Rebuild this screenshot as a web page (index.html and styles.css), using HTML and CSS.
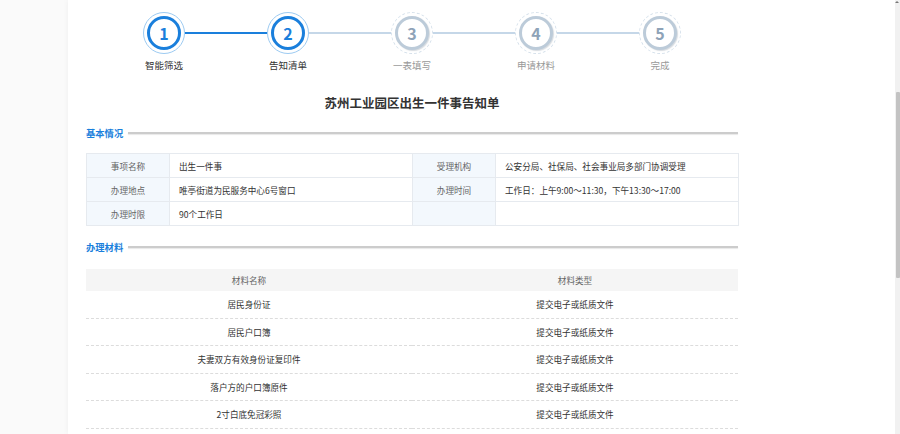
FILE: index.html
```html
<!DOCTYPE html>
<html lang="zh-CN">
<head>
<meta charset="utf-8">
<title>苏州工业园区出生一件事告知单</title>
<link rel="stylesheet" href="styles.css">
</head>
<body>
<div class="page">
  <div class="gutter"></div>
  <main class="panel">
    <div class="steps">
      <div class="step done">
        <span class="circle"><span class="num">1</span></span>
        <span class="label">智能筛选</span>
      </div>
      <span class="conn on"></span>
      <div class="step done">
        <span class="circle"><span class="num">2</span></span>
        <span class="label">告知清单</span>
      </div>
      <span class="conn"></span>
      <div class="step">
        <span class="circle"><span class="num">3</span></span>
        <span class="label">一表填写</span>
      </div>
      <span class="conn"></span>
      <div class="step">
        <span class="circle"><span class="num">4</span></span>
        <span class="label">申请材料</span>
      </div>
      <span class="conn"></span>
      <div class="step">
        <span class="circle"><span class="num">5</span></span>
        <span class="label">完成</span>
      </div>
    </div>

    <h1 class="title">苏州工业园区出生一件事告知单</h1>

    <h2 class="sec">基本情况</h2>
    <table class="info">
      <colgroup>
        <col class="c-label"><col class="c-value"><col class="c-label"><col class="c-value">
      </colgroup>
      <tr>
        <td class="k">事项名称</td><td class="v">出生一件事</td>
        <td class="k">受理机构</td><td class="v">公安分局、社保局、社会事业局多部门协调受理</td>
      </tr>
      <tr>
        <td class="k">办理地点</td><td class="v">唯亭街道为民服务中心6号窗口</td>
        <td class="k">办理时间</td><td class="v">工作日：上午9:00～11:30，下午13:30～17:00</td>
      </tr>
      <tr>
        <td class="k">办理时限</td><td class="v">90个工作日</td>
        <td class="k"></td><td class="v"></td>
      </tr>
    </table>

    <h2 class="sec sec2">办理材料</h2>
    <table class="mat">
      <thead>
        <tr><th>材料名称</th><th>材料类型</th></tr>
      </thead>
      <tbody>
        <tr><td>居民身份证</td><td>提交电子或纸质文件</td></tr>
        <tr><td>居民户口簿</td><td>提交电子或纸质文件</td></tr>
        <tr><td>夫妻双方有效身份证复印件</td><td>提交电子或纸质文件</td></tr>
        <tr><td>落户方的户口簿原件</td><td>提交电子或纸质文件</td></tr>
        <tr><td>2寸白底免冠彩照</td><td>提交电子或纸质文件</td></tr>
      </tbody>
    </table>
  </main>
  <div class="filler"></div>
  <div class="scrollbar">
    <span class="arrow"></span>
    <span class="thumb"></span>
  </div>
</div>
</body>
</html>
```

FILE: styles.css
```css
html, body {
  margin: 0;
  padding: 0;
  height: 434px;
  overflow: hidden;
  background: #fff;
  font-family: "Noto Sans CJK SC", "Microsoft YaHei", sans-serif;
  color: #333;
}

.page {
  display: flex;
  height: 434px;
}

.gutter {
  width: 68px;
  flex: none;
  background: #fafafa;
}

.panel {
  width: 689px;
  flex: none;
  box-sizing: border-box;
  padding: 0 19px 0 18px;
  background: #fff;
  box-shadow: 0 0 6px rgba(0, 0, 0, 0.05);
}

.filler {
  flex: 1;
  background: #fff;
}

.scrollbar {
  width: 5px;
  flex: none;
  background: #f1f1f1;
  display: flex;
  flex-direction: column;
  align-items: flex-end;
}

.arrow {
  width: 0;
  height: 0;
  margin: 1px 1px 0 0;
  border-left: 2px solid transparent;
  border-right: 2px solid transparent;
  border-bottom: 2px solid #777;
}

.thumb {
  width: 4px;
  height: 186px;
  margin-top: 89px;
  background: #c3c3c3;
  border-radius: 1px;
}

/* steps */
.steps {
  display: flex;
  justify-content: center;
  align-items: flex-start;
  margin-top: 12px;
}

.step {
  width: 42px;
  display: flex;
  flex-direction: column;
  align-items: center;
}

.circle {
  width: 42px;
  height: 42px;
  box-sizing: border-box;
  border-radius: 50%;
  border: 1px dashed #d6e1eb;
  display: flex;
  align-items: center;
  justify-content: center;
}

.num {
  width: 34px;
  height: 34px;
  box-sizing: border-box;
  border-radius: 50%;
  border: 3px solid #bccbd9;
  box-shadow: 1px 1px 1px rgba(90, 110, 130, 0.25);
  display: flex;
  align-items: center;
  justify-content: center;
  font-size: 16px;
  font-weight: bold;
  line-height: 1;
  color: #8ea3b8;
  background: #fff;
}

.step.done .circle {
  border: 1px solid #9dcbf2;
}

.step.done .num {
  border-color: #1a7fdc;
  color: #1a7fdc;
  box-shadow: none;
}

.label {
  margin-top: 5px;
  white-space: nowrap;
  font-size: 9.5px;
  line-height: 12px;
  color: #999;
}

.step.done .label {
  color: #333;
}

.conn {
  width: 82px;
  height: 2px;
  margin-top: 20px;
  background: #c5d7e8;
}

.conn.on {
  background: #1a7fdc;
}

/* title */
.title {
  margin: 24px 0 0;
  text-align: center;
  font-size: 12.5px;
  line-height: 16px;
  font-weight: bold;
  color: #333;
}

.sec {
  display: flex;
  align-items: center;
  gap: 5px;
  margin: 16px 0 0;
  font-size: 9.3px;
  line-height: 12px;
  font-weight: bold;
  color: #1a7fdc;
}

.sec::after {
  content: "";
  flex: 1;
  height: 2px;
  background: #cccccc;
  box-shadow: 0 1px 1px #e8e8e8;
}

.sec2 {
  margin-top: 15px;
}

/* info table */
.info {
  width: 100%;
  margin-top: 14px;
  border-collapse: collapse;
  table-layout: fixed;
  font-size: 8.6px;
}

.c-label {
  width: 83px;
}

.c-value {
  width: 243px;
}

.info td {
  height: 23px;
  padding: 0;
  border: 1px solid #e6eaef;
  line-height: 12px;
}

.info .k {
  background: #f3f8fd;
  color: #666;
  text-align: center;
}

.info .v {
  padding-left: 9px;
  color: #333;
}

/* materials table */
.mat {
  width: 100%;
  margin-top: 16px;
  border-collapse: collapse;
  table-layout: fixed;
  font-size: 8.6px;
}

.mat th {
  height: 22px;
  padding: 0;
  background: #f5f5f5;
  font-weight: normal;
  color: #666;
  text-align: center;
}

.mat td {
  height: 26.5px;
  padding: 0;
  border-bottom: 1px dashed #dcdcdc;
  text-align: center;
  color: #333;
}
```
